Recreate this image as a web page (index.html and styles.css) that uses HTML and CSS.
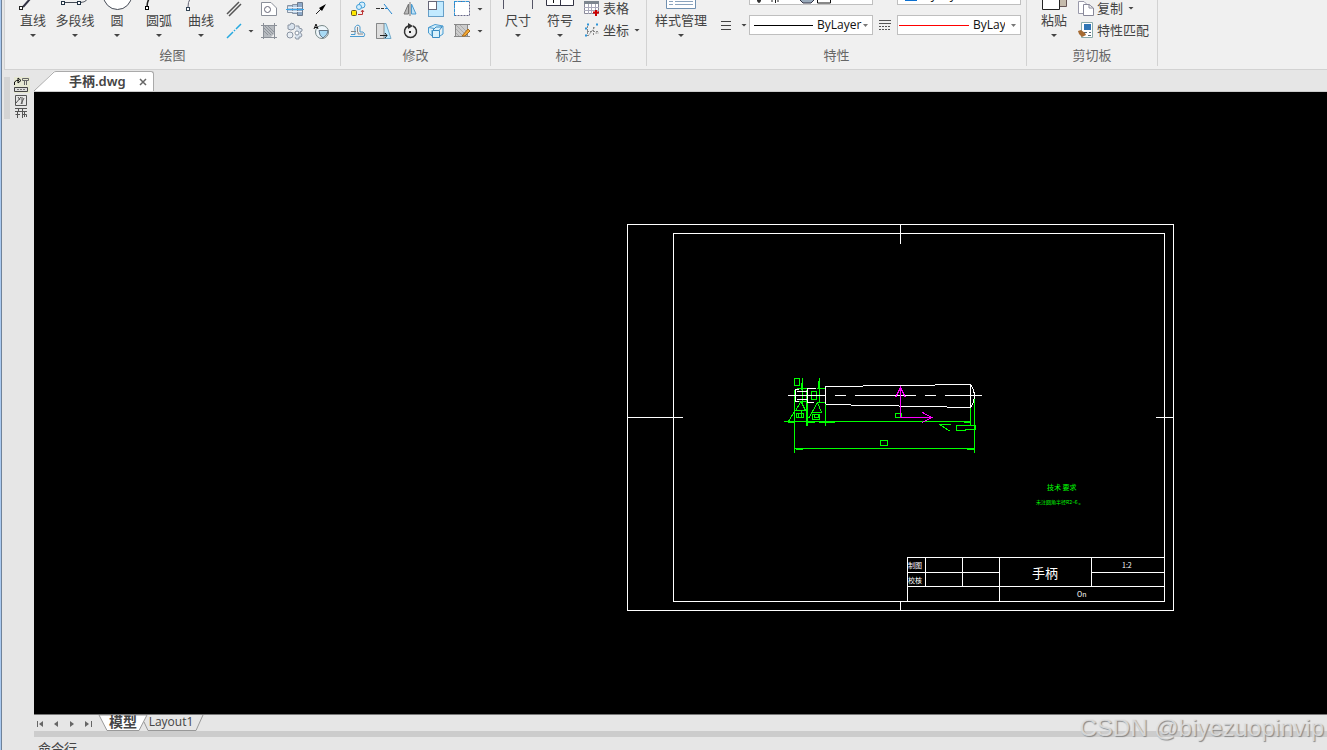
FILE: index.html
```html
<!DOCTYPE html>
<html lang="zh-CN">
<head>
<meta charset="utf-8">
<title>手柄.dwg</title>
<link rel="stylesheet" href="styles.css">
</head>
<body>
<div class="app">
  <header class="ribbon">
    <section class="group group-draw">
      <div class="tools">
        <button class="big"><svg class="big-icon" viewBox="0 0 42 12"><path d="M11 7 18-1" stroke="#334" stroke-width="2"/><rect x="7.500" y="6.500" width="3" height="3" fill="#fff" stroke="#222"/></svg><span>直线</span><i class="caret"></i></button>
        <button class="big"><svg class="big-icon" viewBox="0 0 42 12"><path d="M9 2.500H24C28 2.500 32 2 33-1" fill="none" stroke="#444a55"/><rect x="7.500" y="1.500" width="3" height="3" fill="#fff" stroke="#234"/><rect x="23.500" y="1.500" width="3" height="3" fill="#fff" stroke="#234"/></svg><span>多段线</span><i class="caret"></i></button>
        <button class="big"><svg class="big-icon" viewBox="0 0 42 12"><circle cx="21.500" cy="-4.500" r="14" fill="#fff" stroke="#444a55"/></svg><span>圆</span><i class="caret"></i></button>
        <button class="big"><svg class="big-icon" viewBox="0 0 42 12"><path d="M9 7Q9 2 11-1" fill="none" stroke="#222" stroke-width="1.500"/><rect x="7.500" y="6.500" width="3" height="3" fill="#fff" stroke="#000"/></svg><span>圆弧</span><i class="caret"></i></button>
        <button class="big"><svg class="big-icon" viewBox="0 0 42 12"><path d="M8 7Q8 2 10-1" fill="none" stroke="#667"/><rect x="6.500" y="7.500" width="3" height="3" fill="#fff" stroke="#345"/></svg><span>曲线</span><i class="caret"></i></button>
        <div class="icons draw-icons">
          <button aria-label="双线"><svg viewBox="0 0 18 18"><path d="M2 14 14 2M4 16 16 4" stroke="#555" stroke-width="1.500"/></svg></button><span></span>
          <button aria-label="多边形"><svg viewBox="0 0 18 18"><path d="M1.500 2.500H11L16.500 8V15.500H1.500Z" fill="#fff" stroke="#8a8f99"/><circle cx="7.500" cy="9.500" r="3" fill="#fff" stroke="#667"/></svg></button>
          <button aria-label="螺栓"><svg viewBox="0 0 18 18"><path d="M1.500 5.500H6.500V12.500H1.500ZM6.500 4.500H11.500V13.500H6.500Z" fill="#b5cbe2" stroke="#8794a4"/><path d="M11.500 2.500H16.500V15.500H11.500Z" fill="#8ea9c8" stroke="#6c7a8c"/><path d="M0 9.500H18" stroke="#3ba5e8"/><path d="M2 7.500H16M2 11.500H16" stroke="#e8f1f9"/></svg></button>
          <button aria-label="箭头"><svg viewBox="0 0 18 18"><path d="M4 14 9 9" stroke="#222"/><path d="M14 4 7 8 10 11Z" fill="#000"/></svg></button>
          <button aria-label="中心线"><svg viewBox="0 0 18 18"><path d="M2 16 8 10M9 9 10 8M11 7 16 2" stroke="#26a9e0" stroke-width="1.500"/></svg></button><i class="caret"></i>
          <button aria-label="填充"><svg viewBox="0 0 18 18"><path d="M3 3H15V11L11 15H3Z" fill="#b6babf"/><path d="M4 9 8 13M4 6 11 13M5 4 13 12M8 4 14 10" stroke="#8f949b"/><path d="M1 3.500H17M1 15.500H17M3.500 1V17M14.500 1V17" stroke="#8b9098"/></svg></button>
          <button aria-label="零件"><svg viewBox="0 0 18 18"><path d="M2 3H4L5 1 8 2 9 4 8 7 5 8 2 7ZM10 4H13V6L16 7V9L14 10 16 13 15 15H13V17H10L9 15" fill="#d9e3ee" stroke="#8a94a2"/><circle cx="4" cy="13" r="3" fill="#e9eef4" stroke="#8a94a2"/><circle cx="11" cy="11" r="2" fill="#fff" stroke="#8a94a2"/></svg></button>
          <button aria-label="文字圆"><svg viewBox="0 0 18 18"><circle cx="10" cy="10" r="6.500" fill="#eef6fb" stroke="#788"/><path d="M7 8.500H16Q16 13 11 16 7 14 7 8.500Z" fill="#a8daf5" stroke="#678"/><path d="M2 7 4 2 6 7M3 5.500H6" fill="none" stroke="#111"/></svg></button>
        </div>
      </div>
      <h2>绘图</h2>
    </section>
    <section class="group group-edit">
      <div class="tools">
        <div class="icons edit-icons">
          <button aria-label="复制对象"><svg viewBox="0 0 18 18"><circle cx="13" cy="5" r="3" fill="#d5eefc" stroke="#45a0d8"/><circle cx="10" cy="7" r="2.500" fill="#d5eefc" stroke="#45a0d8"/><rect x="2.500" y="10.500" width="5" height="5" rx="1" fill="#ffe800" stroke="#685a20"/><path d="M9 14.500H13.500V10M12 12 13.500 10 15 12" fill="none" stroke="#b33"/></svg></button>
          <button aria-label="延伸"><svg viewBox="0 0 18 18"><path d="M1 8.500H5M6 8.500H9" stroke="#333"/><path d="M9 4 17 14" stroke="#2486d0"/><path d="M10 8.500H13" stroke="#2486d0"/></svg></button>
          <button aria-label="镜像"><svg viewBox="0 0 18 18"><path d="M7.500 4V14H3Z" fill="#bbb" stroke="#777"/><path d="M10.500 4V14H15Z" fill="#bfe1f6" stroke="#4b9bd0"/><path d="M9 2V16" stroke="#777"/></svg></button>
          <button aria-label="缩放"><svg viewBox="0 0 18 18"><rect x="1.500" y="1.500" width="15" height="15" fill="#c2eaff" stroke="#679fc8"/><rect x="1.500" y="1.500" width="8" height="8" fill="#fff" stroke="#667"/></svg></button>
          <button aria-label="拉伸"><svg viewBox="0 0 18 18"><rect x="1.500" y="1.500" width="15" height="14" fill="#fff" stroke="#668" stroke-dasharray="2 1"/><path d="M1 1.500H17M1.500 1V16" stroke="#2d94d8" stroke-dasharray="3 1"/></svg></button><i class="caret"></i>
          <button aria-label="偏移"><svg viewBox="0 0 18 18"><path d="M2 12.500H6V8Q5 4 9 3 12 4 11 7V10H14Q17 12 15 14.500H1" fill="none" stroke="#4b9bd0"/><path d="M2 9.500H7M8.500 5V10M9 10V12H14" fill="none" stroke="#888"/></svg></button>
          <button aria-label="斜切"><svg viewBox="0 0 18 18"><path d="M1.500 1.500H11L16 16.500H1.500Z" fill="#bdeaff" stroke="#73a9c8"/><path d="M1.500 1.500H9V16.500H1.500Z" fill="#ddd" stroke="#888"/><path d="M5 13.500H12M10 11 12 13.500 10 16" fill="none" stroke="#222"/></svg></button>
          <button aria-label="旋转"><svg viewBox="0 0 18 18"><path d="M7 4A6 6 0 1 0 12 4" fill="none" stroke="#333" stroke-width="1.500"/><path d="M7 1 12 4 7 7Z" fill="#333"/><rect x="8" y="9" width="2" height="2" fill="#222"/></svg></button>
          <button aria-label="分解"><svg viewBox="0 0 18 18"><path d="M1.500 5.500 8 2.500 16 4 10 7ZM1.500 5.500V11L5 14V8M16 4V12L13 14" fill="#d4f0fc" stroke="#4b9bd0"/><path d="M5.500 8.500H12.500V15.500H5.500ZM6 8 9 5H15L12.500 8" fill="#d8f1fc" stroke="#398bc1"/></svg></button>
          <button aria-label="编辑填充"><svg viewBox="0 0 18 18"><rect x="2.500" y="2.500" width="12" height="12" fill="#ccc" stroke="#888"/><path d="M3 11 6 14M3 7 10 14M3 3 14 14M7 3 14 10" stroke="#aaa"/><path d="M1 2.500H17M1 14.500H17" stroke="#888"/><path d="M9 14 15 7 17 9 12 14Z" fill="#f4a832" stroke="#a66b1c"/></svg></button><i class="caret"></i>
        </div>
      </div>
      <h2>修改</h2>
    </section>
    <section class="group group-dim">
      <div class="tools">
        <button class="big"><svg class="big-icon" viewBox="0 0 42 12"><path d="M6.500 0V9M35.500 0V9" stroke="#556"/></svg><span>尺寸</span><i class="caret"></i></button>
        <button class="big"><svg class="big-icon" viewBox="0 0 42 12"><path d="M7.500-4V5.500H34.500V-4M21.500 0V5" fill="#fff" stroke="#334"/><path d="M14.500 0V3" stroke="#111"/></svg><span>符号</span><i class="caret"></i></button>
        <div class="rows">
          <button class="row"><svg viewBox="0 0 18 18"><path d="M1.500 2.500H15.500V14.500H1.500Z" fill="#fff" stroke="#889"/><path d="M1 2H16V5H1Z" fill="#7c858f"/><path d="M1 8.500H16M1 11.500H16M5.500 5V15M8.500 5V15M12.500 5V15" stroke="#aab"/><path d="M10 13.500H16M13 11V17" stroke="#c00" stroke-width="2"/></svg><span>表格</span></button>
          <button class="row"><svg viewBox="0 0 18 18"><path d="M4.500 5V15M4 10.500H15M10.500 6V14M5 15 12 6M12.500 12H16" fill="none" stroke="#888" stroke-dasharray="2 1"/><path d="M4 3.500H6M13 3.500H15M2 7.500H4M2 14.500H4" stroke="#2d94d8" stroke-width="2"/></svg><span>坐标</span><i class="caret"></i></button>
        </div>
      </div>
      <h2>标注</h2>
    </section>
    <section class="group group-props">
      <div class="tools">
        <button class="big wide"><svg class="big-icon" viewBox="0 0 42 12"><path d="M6.500-4V8.500H35.500V-4" fill="#fff" stroke="#7090b0"/><path d="M9 1.500H13M15 1.500H33M9 4.500H13M15 4.500H33" stroke="#8aa3bd"/></svg><span>样式管理</span><i class="caret"></i></button>
        <div class="props">
          <button class="glyph" aria-label="图层"><svg viewBox="0 0 18 18"><path d="M2.500 3V12.500H8.500V6H4M4 9.500H7" fill="none" stroke="#888"/></svg></button><span></span>
          <div class="combo layer"><select aria-label="图层列表"><option></option></select><svg class="states" viewBox="0 0 80 6"><path d="M6 0H10V2Q8 6 6 2Z" fill="#333"/><path d="M19 .500H30M21 1V3M27 1V3M24.500 0V4" stroke="#222"/><path d="M34 .500H42" stroke="#111"/><path d="M48 0H63V1L60 4H52Z" fill="#9ab" stroke="#334"/><path d="M66.500-2V4H79.500V-2" fill="#fff" stroke="#111"/></svg></div>
          <button class="glyph" aria-label="颜色"><svg viewBox="0 0 18 18"><circle cx="9" cy="7" r="5" fill="#f5dc25" stroke="#b99"/><path d="M4 8Q6 12 9 12V8Z" fill="#9ccc52"/></svg></button>
          <div class="combo color"><select aria-label="颜色列表"><option>ByLayer</option></select></div>
          <button class="glyph" aria-label="线宽"><svg viewBox="0 0 18 18"><path d="M4 5.500H14M4 9.500H14M4 13.500H14" stroke="#444"/></svg></button><i class="caret"></i>
          <div class="combo"><select class="line" aria-label="线宽列表"><option>ByLayer</option></select><i class="sample"></i><i class="drop"></i></div>
          <button class="glyph" aria-label="线型"><svg viewBox="0 0 18 18"><path d="M3 4.500H15M3 7.500H15" stroke="#555"/><path d="M3 10.500H15M3 13.500H15" stroke="#555" stroke-dasharray="2 1"/></svg></button>
          <div class="combo"><select class="line long" aria-label="线型列表"><option>ByLayer</option></select><i class="sample red"></i><i class="drop"></i></div>
        </div>
      </div>
      <h2>特性</h2>
    </section>
    <section class="group group-clip">
      <div class="tools">
        <button class="big"><svg class="big-icon" viewBox="0 0 42 12"><path d="M26-3H33.500V6.500H26Z" fill="#c5bbac" stroke="#655"/><path d="M9.500-4V9.500H26.500V-4" fill="#fff" stroke="#222"/></svg><span>粘贴</span><i class="caret"></i></button>
        <div class="rows">
          <button class="row"><svg viewBox="0 0 18 18"><path d="M1.500 2.500H7L10.500 6V14.500H1.500Z" fill="#fff" stroke="#99a"/><path d="M6.500 5.500H12L16.500 9V16.500H6.500Z" fill="#fff" stroke="#889"/><path d="M12 5V9H16" fill="none" stroke="#889"/></svg><span>复制</span><i class="caret"></i></button>
          <button class="row"><svg viewBox="0 0 18 18"><path d="M4.500 1.500H15.500V16.500H4.500Z" fill="#fff" stroke="#8aa"/><rect x="7" y="3" width="7" height="6" fill="#2f75b5"/><path d="M7 11.500H10M12 11.500H14M11 14.500H14" stroke="#567"/><path d="M1 10 4 9 8 12 9 14 5 16 2 13Z" fill="#a66b33"/></svg><span>特性匹配</span></button>
        </div>
      </div>
      <h2>剪切板</h2>
    </section>
  </header>

  <aside class="palette">
    <div class="grip"></div>
    <svg class="palette-icon" viewBox="0 0 16 42"><rect width="16" height="16" fill="#e6e8d2"/><path d="M.500 8V5L2.500 3.500H5M4 1 7 3.500 4 6Z" fill="none" stroke="#111"/><path d="M8.500 1.500H14.500V3.500H8.500ZM10.500 4V8M12.500 4V8" fill="none" stroke="#666"/><path d="M.500 10.500H13.500V14.500H.500Z" fill="#ddd" stroke="#444"/><path d="M3 12.500H12" stroke="#777" stroke-dasharray="2 1"/><path d="M1.500 18.500H12.500V28.500H1.500ZM2 26 7 20M4 20 6 23M8 27V20M10 21 7 27" fill="none" stroke="#555"/><path d="M1 31.500H13M4.500 31V34M1 34.500H13M1.500 37.500H6M3.500 34V41M8.500 32V41M8 37.500H12.500V40M10.500 34V40" fill="none" stroke="#555"/></svg>
  </aside>

  <nav class="doc-tabs">
    <svg class="tab-edge" viewBox="0 0 22 20"><path d="M0 20 19 1Q20 0 22 0V20Z" fill="#fff"/><path d="M0 20 19 2Q20 .500 22 .500" fill="none" stroke="#aaa"/></svg>
    <div class="doc-tab"><a href="#drawing">手柄.dwg</a><button aria-label="关闭"><svg viewBox="0 0 8 8"><path d="M1 1 7 7M7 1 1 7" stroke="#666" stroke-width="1.500"/></svg></button></div>
  </nav>

  <main class="canvas" id="drawing">
    <svg viewBox="34 92 1293 622" preserveAspectRatio="xMinYMin meet">
      <g class="ink" transform="translate(.5 .5)">
        <path d="M627 224H1173V610H627ZM673 233H1164V601H673ZM900 224V243M900 601V610M627 417H682M1155 417H1173"/>
        <path d="M907 601V557H1164M907 572H999M1091 572H1164M907 586H1164M925 557V586M962 557V586M999 557V601M1091 557V586"/>
        <g class="green">
          <path d="M794 389V452M974 395V452M794 448H974M795 449H802M966 449H974M783 421H970M787 422H794M805 422H814M818 422H834M963 422H970M970 403V425M956 425H975V429H965V430H956ZM950 424H939L950 431M880 440H887V445H880Z"/>
          <path d="M794 378H799V385H794ZM802 377V404M801 382V389M796 388H808M796 401H806M819 377V402M818 380V387M806 389V425M807 398V425M825 386V425M816 388H825M816 402H825M811 391H816V399H811Z"/>
          <path d="M800 402 795 410H807M801 402 805 410M794 411 788 421M796 413H803V417H796ZM798 413V417M801 410V416M817 402 808 418M817 402 821 412H811M812 414H819V419H812ZM814 414H818V417H814ZM895 413H901V417H895Z"/>
        </g>
        <path d="M787 395H825M834 395H845M854 395H915M924 395H935M944 395H981"/>
        <path d="M798 389H795V401H798M796 391H806M796 399H806M815 388H807V402H813M825 403V386H862M862 385H934M934 384H970V407H946M825 404H850M850 405H898M898 406H946M970 384 973 389 974 395 973 402 970 407"/>
        <path class="magenta" d="M900 417V387M895 397 900 387 905 397M900 417H931M922 412 931 417 922 422"/>
      </g>
      <g class="cad-text">
        <text class="title" x="1032" y="578">手柄</text>
        <text x="908" y="568">制图</text>
        <text x="908" y="583">校核</text>
        <text x="1122" y="568">1:2</text>
        <text x="1077" y="597">On</text>
        <text class="note" x="1047" y="490">技术 要求</text>
        <text class="note small" x="1036" y="504">未注圆角半径R2~6 。</text>
      </g>
    </svg>
  </main>

  <nav class="sheet-tabs">
    <div class="pager">
      <button aria-label="第一页"><svg viewBox="0 0 8 8"><path d="M1.500 1V7" stroke="#666"/><path d="M7 1V7L3 4Z" fill="#666"/></svg></button>
      <button aria-label="上一页"><svg viewBox="0 0 8 8"><path d="M6 1V7L2 4Z" fill="#666"/></svg></button>
      <button aria-label="下一页"><svg viewBox="0 0 8 8"><path d="M2 1V7L6 4Z" fill="#666"/></svg></button>
      <button aria-label="最后一页"><svg viewBox="0 0 8 8"><path d="M1 1V7L5 4Z" fill="#666"/><path d="M7.500 1V7" stroke="#666"/></svg></button>
    </div>
    <a class="sheet active" href="#drawing"><svg viewBox="0 0 50 16" preserveAspectRatio="none"><path d="M1 0 9 15.500H41L49 0Z" fill="#fff" stroke="#999"/></svg><span>模型</span></a>
    <a class="sheet" href="#layout1"><svg viewBox="0 0 62 16" preserveAspectRatio="none"><path d="M2 7 6 15.500H54L61 0" fill="none" stroke="#999"/></svg><span>Layout1</span></a>
  </nav>
  <footer class="command">命令行</footer>
  <div class="watermark">CSDN @biyezuopinvip</div>
</div>
</body>
</html>
```
FILE: styles.css
```css
* { box-sizing: border-box; }

body {
  margin: 0;
  overflow: hidden;
  font: 13px/17px "Open Sans", "Noto Sans CJK SC", sans-serif;
  color: #444;
  background: #e6e6e6;
}

button {
  padding: 0;
  border: 0;
  background: none;
  font: inherit;
  color: inherit;
}

a { color: inherit; text-decoration: none; }

svg { display: block; }

.app {
  position: relative;
  display: grid;
  grid-template-columns: 30px minmax(0, 1fr);
  grid-template-rows: 70px 22px minmax(0, 1fr) 17px 19px;
  height: 100vh;
  padding-left: 4px;
  background: linear-gradient(90deg, #a9c9f0 1px, #6f8299 1px 2px, #e6e6e6 2px);
}

/* Ribbon */
.ribbon {
  grid-column: 1 / -1;
  display: flex;
  background: #f0f0f0;
  border-bottom: 1px solid #d2d2d2;
  border-left: 1px solid #d2d2d2;
}

.group {
  display: flex;
  flex: none;
  flex-direction: column;
  height: 66px;
  border-right: 1px solid #d2d2d2;
}

.group-draw { width: 336px; }
.group-edit { width: 150px; }
.group-dim { width: 156px; }
.group-props { width: 380px; }
.group-clip { width: 131px; }

.group h2 {
  margin: 0;
  text-align: center;
  font-size: 13px;
  font-weight: 400;
  line-height: 17px;
  color: #666;
}

.tools { display: flex; height: 47px; padding-left: 6px; }
.group-draw .tools { padding-left: 7px; }
.group-edit .tools, .group-props .tools { padding-left: 4px; }

.big {
  display: flex;
  flex-direction: column;
  align-items: center;
  width: 42px;
  height: 40px;
  white-space: nowrap;
}

.big.wide { width: 60px; }
.big-icon { flex: none; width: 42px; height: 12px; }
.big .caret { margin-top: 5px; }

.caret {
  width: 6px;
  height: 3px;
  background: #444;
  clip-path: polygon(0 0, 100% 0, 50% 100%);
}

.icons {
  display: grid;
  grid-template-rows: 22px 22px;
  align-items: center;
  justify-items: center;
  height: 44px;
  margin-top: -2px;
}

.icons svg, .row svg, .glyph svg { width: 18px; height: 18px; }
.draw-icons { grid-template-columns: 24px 10px 26px 26px 26px; }
.edit-icons { grid-template-columns: repeat(5, 26px) 10px; }

.rows { display: flex; flex-direction: column; margin-top: -3px; }

.row {
  display: flex;
  align-items: center;
  gap: 2px;
  height: 22px;
  padding-left: 2px;
  white-space: nowrap;
}

.row .caret { margin-left: 3px; }

.props {
  display: grid;
  grid-template-columns: 30px 8px 124px 24px 124px;
  grid-template-rows: 20px 20px;
  row-gap: 10px;
  align-items: center;
  margin-top: -15px;
}

.glyph { display: grid; justify-items: center; }

.combo { position: relative; height: 20px; }

.combo select {
  display: block;
  width: 100%;
  height: 20px;
  padding: 0 10px 0 18px;
  border: 1px solid #bfbfbf;
  border-radius: 0;
  appearance: none;
  font: 12px/16px "Open Sans", sans-serif;
  color: #111;
  background: #fff;
}

.combo select.line { padding-left: 67px; text-overflow: clip; }
.combo select.long { padding: 0 15px 0 75px; }

.sample {
  position: absolute;
  top: 10px;
  left: 5px;
  width: 59px;
  height: 1px;
  background: #000;
}

.sample.red { left: 2px; width: 70px; background: #f00; }

.states {
  position: absolute;
  left: 2px;
  bottom: 0;
  width: 80px;
  height: 6px;
}

.color select { background: linear-gradient(#0a6fd0, #0a6fd0) 7px 3px / 12px 12px no-repeat #fff; padding-left: 25px; }

.drop {
  position: absolute;
  top: 9px;
  right: 5px;
  width: 5px;
  height: 3px;
  background: #777;
  clip-path: polygon(0 0, 100% 0, 50% 100%);
}

/* Side palette */
.palette {
  grid-row: 2 / -1;
  display: flex;
  align-items: flex-start;
  gap: 4px;
  padding-top: 7px;
}

.grip { width: 6px; height: 42px; background: #d4d4d4; }
.palette-icon { width: 16px; height: 42px; }

/* Document tabs */
.doc-tabs {
  display: flex;
  align-items: flex-end;
  border-bottom: 1px solid #ccc;
}

.tab-edge { width: 22px; height: 20px; }

.doc-tab {
  display: flex;
  align-items: center;
  gap: 13px;
  height: 20px;
  padding: 0 6px 0 13px;
  border: 1px solid #aaa;
  border-width: 1px 1px 0 0;
  border-radius: 0 3px 0 0;
  background: #fff;
  font-family: "Noto Sans", "Noto Sans CJK SC", sans-serif;
  font-size: 13px;
  font-weight: 600;
}

.doc-tab svg { width: 8px; height: 8px; }

/* Drawing */
.canvas { overflow: hidden; background: #000; }
.canvas svg { width: 100%; height: 100%; }

.ink {
  fill: none;
  stroke: #fff;
  stroke-width: 1;
  shape-rendering: crispEdges;
}

.green { stroke: #0f0; }
.magenta { stroke: #f0f; }

.cad-text {
  fill: #fff;
  font: 7px "Noto Sans CJK SC", sans-serif;
}

.cad-text .title { font-size: 13px; }
.cad-text .note { fill: #0f0; }
.cad-text .small { font-size: 5px; }

/* Sheet tabs */
.sheet-tabs {
  display: flex;
  border-top: 1px solid #777;
}

.pager {
  display: flex;
  align-items: center;
  gap: 8px;
  width: 64px;
  padding: 2px 0 0 2px;
}

.pager svg { width: 8px; height: 8px; }

.sheet {
  position: relative;
  display: flex;
  justify-content: center;
  width: 50px;
  font-size: 12px;
  line-height: 14px;
}

.sheet svg {
  position: absolute;
  inset: 0;
  width: 100%;
  height: 100%;
}

.sheet span { position: relative; }
.sheet + .sheet { width: 62px; margin-left: -6px; padding-right: 4px; }
.sheet.active { font-size: 14px; font-weight: 700; line-height: 13px; }

.command {
  padding: 3px 4px 0;
  border-top: 6px solid #ccc;
  white-space: nowrap;
  line-height: 17px;
}

.watermark {
  position: absolute;
  right: 3px;
  bottom: 8px;
  font: 24px/28px "Liberation Sans", sans-serif;
  color: rgba(225, 225, 225, .85);
  text-shadow: 1px 1px 1px #888;
}
```
